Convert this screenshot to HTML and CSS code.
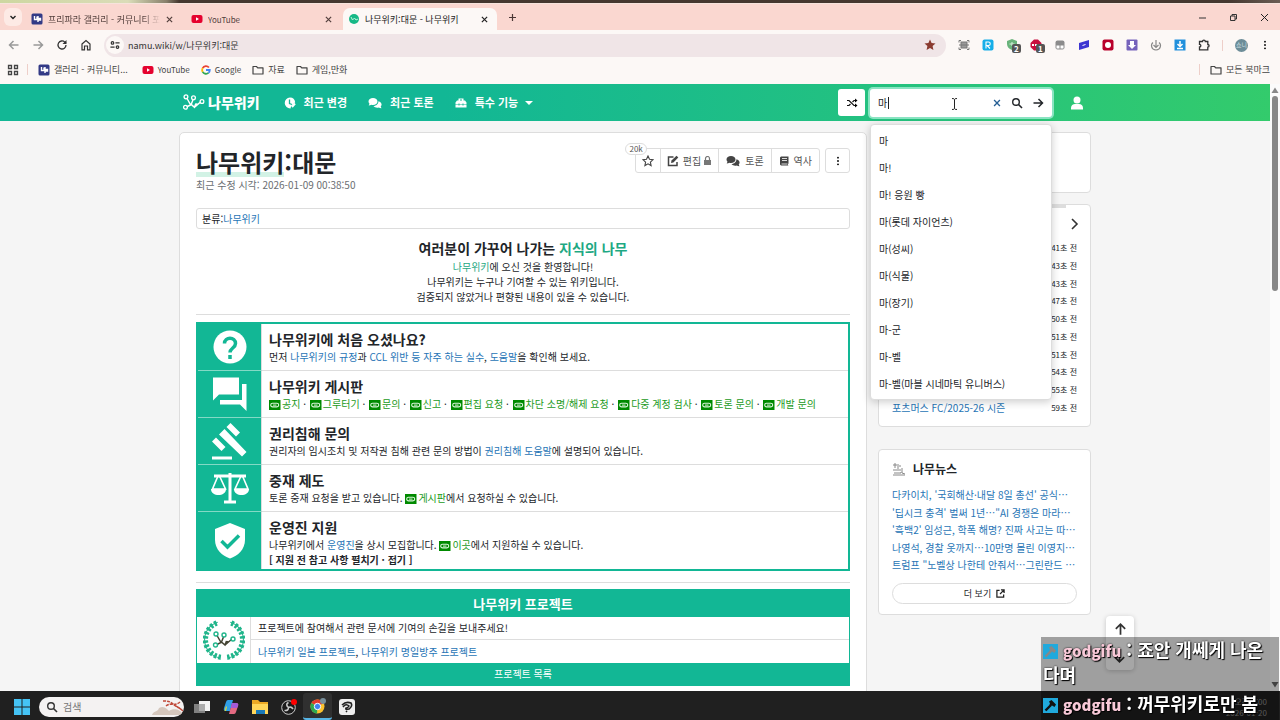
FILE: index.html
```html
<!DOCTYPE html>
<html lang="ko">
<head>
<meta charset="utf-8">
<title>나무위키:대문 - 나무위키</title>
<link rel="stylesheet" href="styles.css">
</head>
<body>
<svg class="defs" aria-hidden="true">
  <symbol id="x" viewBox="0 0 12 12"><path d="M2.500 2.500l7 7m0-7l-7 7" fill="none" stroke="currentColor" stroke-width="1.600"/></symbol>
  <symbol id="folder" viewBox="0 0 12 12"><path d="M1 2.500h3.500l1.200 1.300H11v6.200H1z" fill="none" stroke="currentColor" stroke-width="1.200" stroke-linejoin="round"/></symbol>
  <symbol id="yt" viewBox="0 0 12 12"><rect x="0.500" y="2" width="11" height="8" rx="2" fill="#e5022e"/><path d="M5 4.300v3.400L8 6z" fill="#fff"/></symbol>
  <symbol id="dc" viewBox="0 0 12 12"><rect x="0.500" y="0.500" width="11" height="11" rx="1.500" fill="#333a86"/><path d="M3.500 3v3.500h2.500V3.500M7 3v6M7 5.500h2.500v1.500H7" fill="none" stroke="#fff" stroke-width="1.400"/></symbol>
  <symbol id="chat" viewBox="0 0 14 12"><path d="M5 1C2.500 1 .5 2.500.5 4.500c0 .9.400 1.600 1 2.200L.7 8.500c1.100 0 2-.4 2.600-.8.500.2 1.100.3 1.700.3 2.500 0 4.500-1.500 4.500-3.500S7.500 1 5 1z"/><path d="M10.400 4.200c.1 2.700-2.200 4.600-4.900 4.800.8 1.200 2.300 1.700 3.700 1.700.6 0 1.100-.1 1.600-.3.700.4 1.600.8 2.700.8l-.8-1.600c.6-.6.900-1.200.9-2 0-1.600-1.300-2.900-3.200-3.400z"/></symbol>
  <symbol id="link" viewBox="0 0 12 10"><path d="M0 0h11.500v10H0z" fill="#008a00"/><rect x="1.700" y="3.300" width="8" height="3.600" rx="1.800" fill="none" stroke="#d9f5d9" stroke-width="1.100"/><path d="M4 5.100h3.500" stroke="#d9f5d9"/></symbol>
  <symbol id="branch" viewBox="0 0 24 18"><path d="M5 4.500L9 11.500l-4 2M11.500 6L9.500 11l3.500 3 3.500-3M14.500 10.500L16.500 11l3-2.500M9.500 11L13 14l1.500-4" fill="none" stroke="currentColor" stroke-width="1.500"/><g fill="none" stroke="var(--node, currentColor)" stroke-width="1.400"><circle cx="4" cy="3" r="2"/><circle cx="12" cy="4" r="2"/><circle cx="3.500" cy="14" r="2"/><circle cx="21" cy="8" r="2"/></g></symbol>
  <symbol id="hammer" viewBox="0 0 15 15"><path d="M0 0h15v15H0z" fill="#20a9dc"/><path d="M2.500 12.500L8 7" stroke="currentColor" stroke-width="2.400"/><path d="M6 3.500L8.500 2l4.500 4.500L11.500 9 9 7.500 7.500 8 6.500 7l.5-1.500z" fill="currentColor"/></symbol>
  <symbol id="arrow" viewBox="0 0 12 12"><path d="M1.500 6h9M6.500 2l4 4-4 4" fill="none" stroke="currentColor" stroke-width="1.500"/></symbol>
  <symbol id="mag" viewBox="0 0 12 12"><circle cx="5" cy="5" r="3.300" fill="none" stroke="currentColor" stroke-width="1.400"/><path d="M7.500 7.500l3.500 3.500" stroke="currentColor" stroke-width="1.600"/></symbol>
  <symbol id="dots" viewBox="0 0 12 12"><circle cx="6" cy="2" r="1.100"/><circle cx="6" cy="6" r="1.100"/><circle cx="6" cy="10" r="1.100"/></symbol>
</svg>

<div class="strip"></div>
<div class="tabs">
  <button class="tabsearch" aria-label="탭 검색"><svg class="i8" viewBox="0 0 8 8"><path d="M1.500 3L4 5.500 6.500 3" fill="none" stroke="#222" stroke-width="1.400"/></svg></button>
  <div class="tab"><svg class="i12"><use href="#dc"/></svg><span class="tabname fade">프리파라 갤러리 - 커뮤니티 포</span><button aria-label="닫기"><svg class="i9"><use href="#x"/></svg></button></div>
  <div class="tab"><svg class="i12"><use href="#yt"/></svg><span class="tabname latin">YouTube</span><button aria-label="닫기"><svg class="i9"><use href="#x"/></svg></button></div>
  <div class="tab active"><svg class="i12" viewBox="0 0 12 12"><circle cx="6" cy="6" r="5" fill="#16b886"/><path d="M3 4l1.500 3 2-2L8 7l2-1" fill="none" stroke="#bff3dd"/></svg><span class="tabname">나무위키:대문 - 나무위키</span><button aria-label="닫기"><svg class="i9"><use href="#x"/></svg></button></div>
  <button class="newtab" aria-label="새 탭"><svg class="i9" viewBox="0 0 9 9"><path d="M4.500 1v7M1 4.500h7" stroke="#4b3836" stroke-width="1.200"/></svg></button>
  <div class="winbtns">
    <button aria-label="최소화"><svg class="i9" viewBox="0 0 9 9"><path d="M1 5h7" stroke="#333"/></svg></button>
    <button aria-label="이전 크기로"><svg class="i9" viewBox="0 0 9 9"><path d="M1.500 3h4.500v4.500H1.500zM3 3V1.500h4.500V6H6" fill="none" stroke="#333"/></svg></button>
    <button aria-label="창 닫기"><svg class="i9" viewBox="0 0 9 9"><path d="M1 1l7 7m0-7L1 8" stroke="#222"/></svg></button>
  </div>
</div>

<div class="toolbar">
  <button class="dim flip" aria-label="뒤로"><svg class="i12"><use href="#arrow"/></svg></button>
  <button class="dim" aria-label="앞으로"><svg class="i12"><use href="#arrow"/></svg></button>
  <button aria-label="새로고침"><svg class="i12" viewBox="0 0 12 12"><path d="M10 6a4 4 0 1 1-1.200-2.900L10 4.200" fill="none" stroke="currentColor" stroke-width="1.300"/><path d="M10.500 1v4h-4z" fill="currentColor"/></svg></button>
  <button aria-label="홈"><svg class="i12" viewBox="0 0 12 12"><path d="M2 5l4-3.500L10 5v5.800H7.500V7h-3v3.800H2z" fill="none" stroke="currentColor" stroke-width="1.200"/></svg></button>
  <div class="omnibox">
    <span class="site"><svg class="i10" viewBox="0 0 12 12"><g fill="none" stroke="#333" stroke-width="1.500"><circle cx="3" cy="3.500" r="1.500"/><path d="M6.500 3.500h5M.5 8.500h5"/><circle cx="9" cy="8.500" r="1.500"/></g></svg></span>
    <input class="url" aria-label="주소" value="namu.wiki/w/나무위키:대문">
    <svg class="i12" viewBox="0 0 12 12"><path d="M6 .5l1.600 3.600 3.900.4-2.900 2.600.8 3.900L6 9l-3.400 2 .8-3.900L.5 4.500l3.900-.4z" fill="#8a3b30"/></svg>
  </div>
  <div class="exts">
    <svg class="i12" viewBox="0 0 12 12"><g fill="none" stroke="#777"><path d="M1 3.500V1.500h2M9 1.500h2v2M11 8.500v2H9M3 10.500H1v-2"/><rect x="3" y="3" width="6" height="6" fill="#999"/><path d="M1 6h10"/></g></svg>
    <svg class="i12" viewBox="0 0 12 12"><rect x=".5" y=".5" width="11" height="11" rx="2" fill="#16aee8"/><path d="M4 9.500V3h2.500a1.500 1.500 0 0 1 0 3.500H5l3 3" fill="none" stroke="#fff" stroke-width="1.100"/></svg>
    <span class="ext"><svg class="i12" viewBox="0 0 12 12"><path d="M6 0l5 2v3c0 3-2 5-5 6-3-1-5-3-5-6V2z" fill="#69b37b"/><path d="M3.500 5h5M6 3v4" stroke="#d9f0de"/></svg><b class="count">2</b></span>
    <span class="ext"><svg class="i12" viewBox="0 0 12 12"><path d="M4 .5h4L11.500 4v4L8 11.500H4L.5 8V4z" fill="#c80f3e"/><path d="M2 6h8" stroke="#fff" stroke-width="2" stroke-dasharray="2 1"/></svg><b class="count">1</b></span>
    <svg class="i12" viewBox="0 0 12 12"><rect x="1.500" y="1.500" width="9" height="9" rx="2" fill="#8b8b8b"/><path d="M2.500 6.500h3v3h-3zM6.500 6.500h3v3h-3z" fill="#fff"/></svg>
    <svg class="i12" viewBox="0 0 12 12"><path d="M1 4l10-3v7L1 11z" fill="#3d35d1"/><path d="M4.500 6.500l3-1" stroke="#fff"/></svg>
    <svg class="i12" viewBox="0 0 12 12"><rect x=".5" y=".5" width="11" height="11" rx="2" fill="#b8002b"/><circle cx="6" cy="6" r="3" fill="#fff"/></svg>
    <svg class="i12" viewBox="0 0 12 12"><rect x=".5" y=".5" width="11" height="11" rx="1" fill="#7663bb"/><path d="M4 2h4v4h2l-4 4-4-4h2z" fill="#fff"/></svg>
    <svg class="i12" viewBox="0 0 12 12"><g fill="none" stroke="#888" stroke-width="1.200"><path d="M6 1v7M3.500 6L6 8.500 8.500 6M3 3.500C.5 5.500 1 10.500 6 11c5-.5 5.500-5.500 3-7.500"/></g></svg>
    <svg class="i12" viewBox="0 0 12 12"><path d="M.5.500h11v11H.5z" fill="#2290dc"/><path d="M6 2v5M3.500 5L6 7.500 8.500 5M3 9.500h6" fill="none" stroke="#fff" stroke-width="1.500"/></svg>
    <svg class="i12" viewBox="0 0 12 12"><path d="M1.500 2.500h3a1.400 1.400 0 0 1 2.800 0h2.500v3a1.300 1.300 0 0 1 0 2.600v2.700H1.500V8a1.300 1.300 0 0 0 0-2.700z" fill="none" stroke="#333" stroke-width="1.300"/></svg>
  </div>
  <span class="vline"></span>
  <span class="avatar">쇼니</span>
  <button class="kebab" aria-label="메뉴"><svg class="i10"><use href="#dots"/></svg></button>
</div>

<nav class="bookmarks">
  <svg class="i12 apps" viewBox="0 0 12 12"><path d="M1.500 1.500h3v3h-3zM7.500 1.500h3v3h-3zM1.500 7.500h3v3h-3zM7.500 7.500h3v3h-3z" fill="none" stroke="#444" stroke-width="1.300"/></svg>
  <span class="vline"></span>
  <a class="gallery" href="#"><svg class="i12"><use href="#dc"/></svg>갤러리 - 커뮤니티...</a>
  <a class="latin" href="#"><svg class="i12"><use href="#yt"/></svg>YouTube</a>
  <a class="latin" href="#"><svg class="i10" viewBox="0 0 12 12"><g fill="none" stroke-width="2.200"><path d="M9.500 3A4.600 4.600 0 0 0 2 3.800" stroke="#ea4335"/><path d="M2 3.800a4.600 4.600 0 0 0 0 4.400" stroke="#fbbc05"/><path d="M2 8.200a4.600 4.600 0 0 0 7 1.300" stroke="#34a853"/><path d="M9 9.500A4.600 4.600 0 0 0 10.500 6H6" stroke="#4285f4"/></g></svg>Google</a>
  <a href="#"><svg class="i12"><use href="#folder"/></svg>자료</a>
  <a href="#"><svg class="i12"><use href="#folder"/></svg>게임,만화</a>
  <span class="vline end"></span>
  <a href="#"><svg class="i12"><use href="#folder"/></svg>모든 북마크</a>
</nav>

<div class="view">
  <div class="page">
    <header class="head">
      <div class="wrap headrow">
        <a class="logo" href="#"><svg viewBox="0 0 24 18"><use href="#branch"/></svg><b>나무위키</b></a>
        <a class="nav" href="#"><svg class="i12" viewBox="0 0 12 12"><path d="M6 .5a5.500 5.500 0 1 0 .5 11l.5-2 4.200-4.300A5.500 5.500 0 0 0 6 .5z" fill="#fff"/><path d="M5.500 2.500v4L8 7.500" fill="none" stroke="#12b795" stroke-width="1.300"/><path d="M8 10l3-3.500" stroke="#fff" stroke-width="2"/></svg>최근 변경</a>
        <a class="nav" href="#"><svg class="i14" fill="#fff"><use href="#chat"/></svg>최근 토론</a>
        <a class="nav tools" href="#"><svg class="i12" viewBox="0 0 12 12"><path d="M3.500 3.500V1.500h5v2H10l1.500 2v2H.5v-2l1.500-2zM5 3.500h2v-1H5zM.5 8H11.500v2.500H.5z" fill="#fff" fill-rule="evenodd"/><path d="M4 6.500v2M8 6.500v2" stroke="#15b792"/></svg>특수 기능<svg class="i8 caret" viewBox="0 0 8 8"><path d="M0 2h8L4 6z" fill="#fff"/></svg></a>
        <button class="shuffle" aria-label="임의 문서"><svg class="i12" viewBox="0 0 12 12"><path d="M1 3.500h2l5 5h2M1 8.500h2l1.500-1.500M6.500 5L8 3.500h2" fill="none" stroke="#111" stroke-width="1.200"/><path d="M9 1.500l2.500 2-2.500 2zM9 6.500l2.500 2-2.500 2z"/></svg></button>
        <form class="search">
          <input aria-label="검색" value="마">
          <span class="textcaret"></span>
          <button type="button" class="clear" aria-label="지우기"><svg class="i10"><use href="#x"/></svg></button>
          <button type="button" aria-label="검색"><svg class="i12"><use href="#mag"/></svg></button>
          <button type="button" aria-label="이동"><svg class="i12"><use href="#arrow"/></svg></button>
          <svg class="ibeam" viewBox="0 0 7 12"><path d="M1 .5q2.500 0 2.500 1 0-1 2.500-1M3.500 1.500v9M1 11.500q2.500 0 2.500-1 0 1 2.500 1" fill="none" stroke="#222"/></svg>
          <ul class="suggest">
            <li>마</li><li>마!</li><li>마! 응원 빵</li><li>마(롯데 자이언츠)</li><li>마(성씨)</li><li>마(식물)</li><li>마(장기)</li><li>마-군</li><li>마-벨</li><li>마-벨(마블 시네마틱 유니버스)</li>
          </ul>
        </form>
        <button class="user" aria-label="사용자"><svg class="i14" viewBox="0 0 14 14"><circle cx="7" cy="4" r="3.500"/><path d="M1 13.500V12c0-2.500 2-4 4-4h4c2 0 4 1.500 4 4v1.500z"/></svg></button>
      </div>
    </header>

    <div class="wrap columns">
      <main class="article">
        <div class="titlebar">
          <div>
            <h1><span>나무위키</span>:대문</h1>
            <p class="date">최근 수정 시각: 2026-01-09 00:38:50</p>
          </div>
          <div class="actions">
            <div class="group">
              <button class="star" aria-label="별찜"><svg class="i12" viewBox="0 0 12 12"><path d="M6 1l1.500 3.300 3.500.4-2.600 2.400.7 3.500L6 8.800l-3.100 1.800.7-3.500L1 4.700l3.500-.4z" fill="none" stroke="#444" stroke-width="1.100"/></svg><span class="stars">20k</span></button>
              <button class="edit"><svg class="i12" viewBox="0 0 12 12"><path d="M6.500 2H1.500v8.500H10V7" fill="none" stroke="#444" stroke-width="1.500"/><path d="M4 8l.5-2.500L9.500.7l1.800 1.800-4.900 5z" fill="#444"/></svg>편집<svg class="i9 lock" viewBox="0 0 9 9"><path d="M1 4h7v5H1z" fill="#777"/><path d="M2.500 4V2.500a2 2 0 0 1 4 0V4" fill="none" stroke="#777" stroke-width="1.200"/></svg></button>
              <button><svg class="i14" fill="#444"><use href="#chat"/></svg>토론</button>
              <button><svg class="i10" viewBox="0 0 10 10"><path d="M1 1.500L2 .5h7.500v7L9 8v1l.5.500H2L1 8.500z" fill="#444"/><path d="M3 2.500h5M3 4.500h5M2.500 8H8.500" stroke="#fff" stroke-width=".8"/></svg>역사</button>
            </div>
            <button class="more" aria-label="더 보기"><svg class="i10"><use href="#dots"/></svg></button>
          </div>
        </div>
        <div class="category">분류:<a href="#">나무위키</a></div>
        <section class="intro">
          <h2>여러분이 가꾸어 나가는 <span>지식의 나무</span></h2>
          <p><span>나무위키</span>에 오신 것을 환영합니다!</p>
          <p>나무위키는 누구나 기여할 수 있는 위키입니다.</p>
          <p>검증되지 않았거나 편향된 내용이 있을 수 있습니다.</p>
        </section>
        <hr>
        <table class="guide">
          <tr><th><svg viewBox="0 0 40 40"><circle cx="20" cy="20" r="16.500" fill="#fff"/><path d="M14.500 16.500c0-7 11-7 11 0 0 4.500-5.500 4.500-5.500 9M20 28v4" fill="none" stroke="#12b795" stroke-width="3.500"/></svg></th>
            <td><h3>나무위키에 처음 오셨나요?</h3><p>먼저 <a href="#">나무위키의 규정</a>과 <a href="#">CCL 위반 등 자주 하는 실수</a>, <a href="#">도움말</a>을 확인해 보세요.</p></td></tr>
          <tr><th><svg viewBox="0 0 40 40"><path d="M3 3.500h26v17H9l-6 6zM32 10h4.500v27L30 30.500H10V26h22z" fill="#fff"/></svg></th>
            <td><h3>나무위키 게시판</h3><p class="boards"><a href="#"><svg><use href="#link"/></svg>공지</a> · <a href="#"><svg><use href="#link"/></svg>그루터기</a> · <a href="#"><svg><use href="#link"/></svg>문의</a> · <a href="#"><svg><use href="#link"/></svg>신고</a> · <a href="#"><svg><use href="#link"/></svg>편집 요청</a> · <a href="#"><svg><use href="#link"/></svg>차단 소명/해제 요청</a> · <a href="#"><svg><use href="#link"/></svg>다중 계정 검사</a> · <a href="#"><svg><use href="#link"/></svg>토론 문의</a> · <a href="#"><svg><use href="#link"/></svg>개발 문의</a></p></td></tr>
          <tr><th><svg viewBox="0 0 40 40"><path d="M20.500 2l9.500 9.500-4 4L16.500 6zM6 16.500l9.500 9.500-4 4L2 20.500zM14.500 8L36.500 31 32 35.500 9 13.500zM2 35.500h20v3H2z" fill="#fff"/></svg></th>
            <td><h3>권리침해 문의</h3><p>권리자의 임시조치 및 저작권 침해 관련 문의 방법이 <a href="#">권리침해 도움말</a>에 설명되어 있습니다.</p></td></tr>
          <tr><th><svg viewBox="0 0 40 40"><path d="M4 8h32M20 5v28M14 34h12" fill="none" stroke="#fff" stroke-width="3"/><path d="M8 8L2.500 21h13L9.500 8M31 8l-6 13h13L32.500 8" fill="none" stroke="#fff" stroke-width="1.600"/><path d="M1 21h15c0 8-15 8-15 0zM24 21h15c0 8-15 8-15 0z" fill="#fff"/></svg></th>
            <td><h3>중재 제도</h3><p>토론 중재 요청을 받고 있습니다. <a class="ext-link" href="#"><svg><use href="#link"/></svg>게시판</a>에서 요청하실 수 있습니다.</p></td></tr>
          <tr class="last"><th><svg viewBox="0 0 40 40"><path d="M20 2l15 6v11c0 9-7 16-15 18.500C12 35 5 28 5 19V8z" fill="#fff"/><path d="M11.500 20l6 6L29 14.500" fill="none" stroke="#12b795" stroke-width="3.500"/></svg></th>
            <td><h3>운영진 지원</h3><p>나무위키에서 <a href="#">운영진</a>을 상시 모집합니다. <a class="ext-link" href="#"><svg><use href="#link"/></svg>이곳</a>에서 지원하실 수 있습니다.</p><p><b>[ 지원 전 참고 사항 펼치기 · 접기 ]</b></p></td></tr>
        </table>
        <hr>
        <section class="project">
          <h3>나무위키 프로젝트</h3>
          <div class="projbody">
            <div class="wreath"><svg class="laurel" viewBox="0 0 40 40"><g fill="none" stroke="#20b58b"><path d="M16 37A17.500 17.500 0 0 1 14 3M24 37A17.500 17.500 0 0 0 26 3" stroke-width="1"/><path d="M17 36.500A17 17 0 0 1 14 3.500M23 36.500A17 17 0 0 0 26 3.500" stroke-width="5" stroke-dasharray="2.500 1.700"/></g></svg><svg class="mini" viewBox="0 0 24 18"><use href="#branch"/></svg></div>
            <div class="projtext"><p>프로젝트에 참여해서 관련 문서에 기여의 손길을 보내주세요!</p><p><a href="#">나무위키 일본 프로젝트</a>, <a href="#">나무위키 명일방주 프로젝트</a></p></div>
          </div>
          <footer>프로젝트 목록</footer>
        </section>
      </main>

      <aside class="side">
        <section class="card blank"></section>
        <section class="card recent">
          <span class="grip"></span>
          <button class="next" aria-label="다음"><svg class="i14" viewBox="0 0 14 14"><path d="M5 2l5 5-5 5" fill="none" stroke="#333" stroke-width="1.600"/></svg></button>
          <ul>
            <li><time>41초 전</time></li><li><time>43초 전</time></li><li><time>43초 전</time></li><li><time>47초 전</time></li><li><time>50초 전</time></li><li><time>51초 전</time></li><li><time>51초 전</time></li><li><time>54초 전</time></li><li><time>55초 전</time></li>
            <li><a href="#">포츠머스 FC/2025-26 시즌</a><time>59초 전</time></li>
          </ul>
        </section>
        <section class="card news">
          <h2><svg class="i14" viewBox="0 0 14 14"><path d="M1 3h4M3 1v5M6 2v5M1 8h8M2 11h7v-1M10 6v5l3 1M1 13h12M7 4h2" fill="none" stroke="#888"/></svg>나무뉴스</h2>
          <ul>
            <li><a href="#">다카이치, '국회해산·내달 8일 총선' 공식…</a></li>
            <li><a href="#">'딥시크 충격' 벌써 1년…"AI 경쟁은 마라…</a></li>
            <li><a href="#">'흑백2' 임성근, 학폭 해명? 진짜 사고는 따…</a></li>
            <li><a href="#">나영석, 경찰 옷까지…10만명 몰린 이영지…</a></li>
            <li><a href="#">트럼프 "노벨상 나한테 안줘서…그린란드 …</a></li>
          </ul>
          <button class="morebtn">더 보기 <svg class="i9" viewBox="0 0 10 10"><path d="M4 1.500H1v7.500h7.500V6M5.500 1H9v3.500M9 1L4.500 5.500" fill="none" stroke="#222" stroke-width="1.400"/></svg></button>
        </section>
      </aside>
    </div>
    <div class="updown"><button aria-label="맨 위로"><svg class="i14"><use href="#arrow"/></svg></button><button aria-label="맨 아래로"><svg class="i14"><use href="#arrow"/></svg></button></div>
  </div>
  <div class="scroll"><svg class="i8" viewBox="0 0 8 8"><path d="M4 1.500L7.500 7h-7z" fill="#888"/></svg><span class="thumb"></span><svg class="i8" viewBox="0 0 8 8"><path d="M4 6.500L7.500 1h-7z" fill="#666"/></svg></div>
</div>

<footer class="taskbar">
  <button class="task" aria-label="시작"><svg class="i16" viewBox="0 0 16 16"><path d="M0 0h7.500v7.500H0zM8.500 0H16v7.500H8.500zM0 8.500h7.500V16H0zM8.500 8.500H16V16H8.500z" fill="#45c3f5"/></svg></button>
  <label class="tasksearch"><svg class="i12"><use href="#mag"/></svg><input placeholder="검색" aria-label="검색"><svg class="art" viewBox="0 0 32 17"><path d="M0 17c1-4 6-3 7-7 5-3 8 1 10 3 4-3 12-2 14 4z" fill="#d5c7bd"/><path d="M11 3c4 0 7 0 10 3s6 3 10 7M14 8c5-4 8 1 14-4M24 8l6 4" fill="none" stroke="#c04a3a" stroke-width="1.500" stroke-dasharray="3 1"/></svg></label>
  <button class="task" aria-label="작업 보기"><svg class="i16" viewBox="0 0 16 16"><path d="M5 2h11v10H5z" fill="#f2f2f2"/><path d="M0 5h11v9H0z" fill="#999" opacity=".8"/></svg></button>
  <button class="task" aria-label="Copilot"><svg class="i16" viewBox="0 0 16 16"><path d="M5 1h5L7 12H3Q0 12 1 9L3 3q.5-2 2-2z" fill="#2f9fe8"/><path d="M4 8l-1 4H1.500L3 7z" fill="#d8d53e"/><path d="M11 15H6L9 4h4q3 0 2 3l-2 6q-.5 2-2 2z" fill="#e46a82"/><path d="M9 4h4q3 0 2 3l-1 2H8z" fill="#a35ad8"/></svg></button>
  <button class="task" aria-label="파일 탐색기"><svg class="i16" viewBox="0 0 16 16"><path d="M0 1h6l2 2h8v12H0z" fill="#eba925"/><path d="M0 5h16v10H0z" fill="#ffd65a"/><path d="M4 11h9v4H4z" fill="#1878b8"/></svg></button>
  <button class="task" aria-label="OBS Studio"><svg class="i16" viewBox="0 0 16 16"><circle cx="7.500" cy="8.500" r="6.800" fill="#1c1c1c" stroke="#ccc"/><path d="M7.500 3.500q-3.500 2 0 5M12 10q-2-3-4.500-1.500M3.500 11.500q4 .5 4-3" fill="none" stroke="#ccc" stroke-width="1.600"/><circle cx="13" cy="3" r="3" fill="#f00"/></svg></button>
  <button class="task on" aria-label="Chrome"><svg class="i16" viewBox="0 0 16 16"><circle cx="7.500" cy="8.500" r="7" fill="#fbc12d"/><path d="M7.500 8.500L1.400 5a7 7 0 0 1 12.200 0z" fill="#e33b2e"/><path d="M7.500 8.500L1.400 5a7 7 0 0 0 5.600 10.500z" fill="#2da94f"/><circle cx="7.500" cy="8.500" r="3.200" fill="#3f82ee" stroke="#fff"/><circle cx="13" cy="3" r="3" fill="#78909c"/></svg></button>
  <button class="task" aria-label="Clip Studio"><svg class="i16" viewBox="0 0 16 16"><rect width="16" height="16" rx="3" fill="#eee"/><path d="M3 6q4-4 9-2 2 3-2 6-4 1-3-1 2 0 3-2Q7 4 4 8M7 12l1 1" fill="none" stroke="#222" stroke-width="1.600"/></svg></button>
  <div class="clock"><span>오전 2:00</span><span>2026-01-20</span></div>
</footer>

<div class="overlay">
  <p class="older"><svg><use href="#hammer"/></svg> <b>godgifu</b> : 죠안 개쎄게 나온다며</p>
  <p><svg><use href="#hammer"/></svg> <b>godgifu</b> : 꺼무위키로만 봄</p>
</div>
</body>
</html>
```
FILE: styles.css
```css
* { box-sizing: border-box; margin: 0; padding: 0; }
body { display: flex; flex-direction: column; height: 100vh; overflow: hidden; font: 10px/15px "Noto Sans CJK KR", "Noto Sans", sans-serif; color: #222529; background: #fcf8f6; }
ul { list-style: none; }
a { color: #2775b6; text-decoration: none; }
button { border: 0; background: none; font: inherit; color: inherit; display: inline-flex; align-items: center; justify-content: center; }
input { border: 0; outline: 0; background: none; font: inherit; color: inherit; min-width: 0; }
svg { flex: none; display: block; }
.defs { position: absolute; width: 0; height: 0; }
.i8 { width: 8px; height: 8px; }
.i9 { width: 9px; height: 9px; }
.i10 { width: 10px; height: 10px; }
.i12 { width: 12px; height: 12px; }
.i14 { width: 14px; height: 14px; }
.i16 { width: 16px; height: 16px; }
.latin { font-size: 8px; }

/* browser frame */
.strip { height: 4px; flex: none; background: linear-gradient(90deg, #cdd7a0 0, #dadcb8 10%, #88806c 13%, #45372f 14%, #45372f 96%, #6b5d54); border-bottom: 1px solid #f6e3dc; }
.tabs { display: flex; align-items: center; flex: none; height: 26px; padding-left: 4px; background: #fad7d0; font-size: 9px; color: #54403d; }
.tabsearch { width: 18px; height: 18px; border-radius: 6px; background: #fdeae5; margin-right: 2px; }
.tab { display: flex; align-items: center; gap: 5px; width: 159px; height: 22px; padding: 0 10px 0 7px; margin-top: 4px; }
.tab:nth-of-type(1) { width: 160px; }
.tab.active { background: #fcf8f6; border-radius: 7px 7px 0 0; color: #222; width: 154px; padding: 0 8px 0 5px; }
.tab button { width: 9px; }
.tabname { flex: 1; overflow: hidden; white-space: nowrap; }
.fade { -webkit-mask-image: linear-gradient(90deg, #000 85%, transparent); mask-image: linear-gradient(90deg, #000 85%, transparent); }
.newtab { margin-left: 9px; width: 12px; }
.winbtns { display: flex; gap: 22px; margin-left: auto; padding-right: 11px; }
.toolbar { display: flex; align-items: center; flex: none; height: 30px; padding: 0 10px 0 8px; gap: 12px; color: #333; }
.toolbar .dim { color: #999; }
.flip svg { transform: scaleX(-1); }
.omnibox { display: flex; align-items: center; flex: 1; height: 23px; border-radius: 12px; background: #f0e5e7; padding: 0 10px 0 2px; gap: 4px; font-size: 9px; }
.site { width: 18px; height: 18px; border-radius: 9px; background: #fcf8f6; display: flex; align-items: center; justify-content: center; }
.url { flex: 1; }
.exts { display: flex; gap: 12px; }
.ext { position: relative; }
.count { position: absolute; left: 6px; top: 5px; min-width: 8px; padding: 0 2px; border-radius: 2px; background: #555; color: #fff; font-size: 8px; line-height: 9px; text-align: center; }
.vline { width: 1px; height: 11px; background: #eecfc9; }
.avatar { width: 13px; height: 13px; border-radius: 7px; background: #6d8d98; color: #cfe0e5; font-size: 6px; line-height: 12px; text-align: center; overflow: hidden; }
.kebab { width: 10px; }
.bookmarks { display: flex; align-items: center; flex: none; height: 24px; padding: 0 10px 5px 7px; gap: 11px; font-size: 9px; }
.bookmarks a { display: flex; align-items: center; gap: 4px; color: #444; }
.bookmarks .vline { margin: 0 -1px 0 -3px; }
.bookmarks .gallery { margin-right: 3px; }
.bookmarks .end { margin-left: auto; }

/* wiki page */
.view { display: flex; flex: 1; min-height: 0; background: #f5f5f5; }
.page { flex: 1; min-width: 0; position: relative; overflow: hidden; }
.scroll { width: 10px; background: #fbfbfb; display: flex; flex-direction: column; align-items: center; padding: 2px 0; }
.thumb { width: 6px; height: 195px; border-radius: 3px; background: #888; margin: 2px 0 auto; }
.wrap { max-width: 912px; margin: 0 auto; }
.head { background: linear-gradient(90deg, #12b795 0, #12b795 35%, #33cb6c); }
.headrow { display: flex; align-items: center; height: 37px; padding: 0 0 0 3px; }
.logo { display: flex; align-items: center; gap: 3px; color: #fff; font-size: 14px; margin-right: 24px; }
.logo b { font-weight: 900; }
.logo svg { width: 23px; height: 17px; }
.nav { display: flex; align-items: center; gap: 8px; color: #fff; font-size: 11px; font-weight: 700; margin-right: 21px; }
.caret { margin-left: -1px; }
.shuffle { width: 27px; height: 27px; background: #fff; border-radius: 3px; margin-left: auto; margin-right: 5px; }
.search { position: relative; display: flex; align-items: center; width: 182px; height: 28px; background: #fff; border-radius: 3px; box-shadow: 0 0 0 2px #8ae4c2; padding: 0 8px; gap: 9px; margin-right: 11px; }
.search input { flex: 1; }
.search .clear { color: #265f94; }
.textcaret { position: absolute; left: 18px; top: 8px; width: 1px; height: 12px; background: #222; }
.ibeam { position: absolute; left: 81px; top: 9px; width: 7px; height: 12px; }
.suggest { position: absolute; left: 0; top: 35px; z-index: 3; width: 182px; padding: 2px 0; background: #fff; border: 1px solid #ddd; border-radius: 4px; box-shadow: 0 2px 8px #0003; font-size: 10px; }
.suggest li { line-height: 27px; padding-left: 8px; }
.user { width: 28px; height: 28px; fill: #fff; }
.columns { display: flex; align-items: flex-start; gap: 11px; padding-top: 11px; }
.article { flex: 1; min-width: 0; background: #fff; border: 1px solid #ddd; border-radius: 5px; padding: 14px 16px 60px; }
.titlebar { display: flex; justify-content: space-between; }
h1 { font-size: 24px; line-height: 30px; font-weight: 700; }
h1 span { background: linear-gradient(#d2f2e5, #d2f2e5) 0 25px / 100% 5px no-repeat; display: inline-block; }
.date { color: #6a6e72; line-height: 16px; }
.actions { display: flex; gap: 5px; color: #555; height: 25px; margin-top: 1px; }
.group { display: flex; border: 1px solid #ddd; border-radius: 3px; }
.group button { padding: 0 7px; gap: 5px; border-left: 1px solid #ddd; }
.group .star { position: relative; border: 0; padding: 0 6px; }
.group .edit { gap: 4px; padding: 0 6px; }
.lock { margin-left: -2px; }
.stars { position: absolute; right: 13px; top: -6px; border: 1px solid #ddd; border-radius: 6px; background: #fff; padding: 0 3px; font-size: 8px; line-height: 10px; }
.more { width: 25px; border: 1px solid #ddd; border-radius: 3px; }
.category { margin-top: 15px; border: 1px solid #ddd; border-radius: 3px; line-height: 19px; padding: 0 5px; }
.intro { text-align: center; padding-top: 9px; }
.intro h2 { font-size: 14px; line-height: 21px; }
.intro h2 span, .intro p span { color: #1ea883; }
hr { border: 0; border-top: 1px solid #ddd; margin: 10px 0 7px; }
.guide { width: 100%; border: 2px solid #12b795; border-spacing: 0; }
.guide th { width: 64px; background: #12b795; border-bottom: 1px solid #83d9c5; border-right: 1px solid #ddd; }
.guide th svg { width: 40px; height: 40px; margin: 0 auto; }
.guide td { border-bottom: 1px solid #ddd; padding: 5px 7px 6px; }
.guide .last th, .guide .last td { border-bottom: 0; }
.guide .last td { padding: 5px 7px 2px; }
.guide h3 { font-size: 14px; line-height: 20px; }
.guide p svg { display: inline-block; width: 12px; height: 10px; margin-right: 1px; vertical-align: -2px; }
.boards a, .ext-link { color: #1b9a1b; }
.boards a + a { margin-left: 1px; }
.guide + hr { margin: 11px 0 6px; }
.project { border: 1px solid #12b795; background: #12b795; text-align: center; color: #fff; }
.project h3 { font-size: 13px; line-height: 27px; }
.projbody { display: flex; background: #fff; color: #222529; text-align: left; }
.wreath { position: relative; width: 54px; padding: 2px 0 0 6px; border-right: 1px solid #ddd; }
.laurel { width: 42px; height: 42px; }
.mini { position: absolute; left: 15px; top: 14px; width: 24px; height: 18px; color: #443; --node: #20b58b; }
.projtext { flex: 1; }
.projtext p { line-height: 22px; padding: 0 7px; }
.projtext p + p { border-top: 1px solid #ddd; line-height: 23px; }
.project footer { line-height: 22px; }
.side { width: 213px; }
.card { position: relative; background: #fff; border: 1px solid #ddd; border-radius: 4px; }
.blank { height: 61px; margin-bottom: 11px; }
.recent { padding: 9px 13px 10px; margin-bottom: 22px; }
.grip { position: absolute; left: 0; top: 0; width: 187px; height: 3px; background: #ddd; }
.next { display: flex; width: 20px; height: 20px; margin-left: auto; margin-right: -7px; }
.recent ul { display: flex; flex-direction: column; height: 177px; margin-top: 5px; }
.recent li { display: flex; align-items: center; justify-content: space-between; flex: 1; }
.recent time { font-size: 8px; margin-left: auto; }
.news { padding: 9px 13px 10px; }
.news h2 { display: flex; align-items: center; gap: 7px; font-size: 12px; line-height: 20px; }
.news ul { display: flex; flex-direction: column; height: 88px; margin: 7px 0 9px; }
.news li { flex: 1; white-space: nowrap; line-height: 17px; }
.morebtn { width: 100%; height: 21px; border: 1px solid #ddd; border-radius: 11px; gap: 5px; font-size: 9px; }
.updown { position: absolute; right: 136px; bottom: 21px; width: 28px; height: 54px; display: flex; flex-direction: column; background: #fff; border-radius: 4px; box-shadow: 0 1px 5px #0003; }
.updown button { flex: 1; color: #333; transform: rotate(-90deg); }
.updown button + button { transform: rotate(90deg); }

/* desktop */
.taskbar { display: flex; align-items: center; flex: none; height: 29px; padding: 2px 13px 0 7px; background: #202020; }
.task { width: 29px; height: 27px; }
.task.on { background: #303030; border-bottom: 2px solid #57b5e6; border-radius: 3px; }
.tasksearch { display: flex; align-items: center; gap: 5px; width: 145px; height: 20px; border-radius: 10px; background: #f4f2f2; color: #333; margin: 0 3px; padding-left: 7px; overflow: hidden; }
.tasksearch input { flex: 1; }
.art { width: 32px; height: 17px; }
.clock { margin-left: auto; display: flex; flex-direction: column; align-items: flex-end; font-size: 8px; line-height: 11px; color: #888; }
.overlay { position: fixed; right: 1px; bottom: 0; z-index: 5; width: 238px; height: 83px; background: #00000059; color: #fff; font-size: 18px; line-height: 25px; font-weight: 700; text-shadow: 0 0 2px #000, 1px 1px 1px #000; padding: 0 1px 0 2px; }
.overlay p { word-break: break-all; }
.overlay p + p { margin-top: 4px; }
.overlay b { color: #f8c9d8; font-size: 15px; line-height: 15px; }
.overlay svg { display: inline-block; width: 15px; height: 15px; vertical-align: -2px; color: #111; }
.overlay .older svg { color: #888; }
```
